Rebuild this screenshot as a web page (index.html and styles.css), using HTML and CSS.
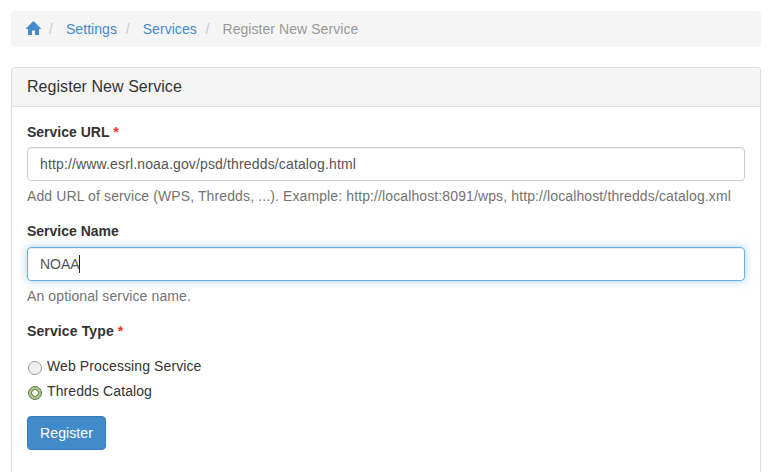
FILE: index.html
```
<!DOCTYPE html>
<html lang="en">
<head>
<meta charset="utf-8">
<title>Register New Service</title>
<link rel="stylesheet" href="styles.css">
</head>
<body>
<ol class="breadcrumb">
  <li><a href="#" aria-label="Home"><svg class="home" viewBox="0 0 15 14" width="15" height="14"><path d="M7.500 0 0 7.500V8h2v6h4V9.500h3V14h4V8h2v-.5z"/></svg></a></li>
  <li><a href="#">Settings</a></li>
  <li><a href="#">Services</a></li>
  <li class="active">Register New Service</li>
</ol>
<section class="panel">
  <h3 class="panel-heading">Register New Service</h3>
  <form class="panel-body">
    <div class="group">
      <label class="title">Service URL <span class="req">*</span></label>
      <div class="control url">http://www.esrl.noaa.gov/psd/thredds/catalog.html</div>
      <p class="help">Add URL of service (WPS, Thredds, ...). Example: http://localhost:8091/wps, http://localhost/thredds/catalog.xml</p>
    </div>
    <div class="group name">
      <label class="title">Service Name</label>
      <div class="control focused">NOAA<span class="caret"></span></div>
      <p class="help">An optional service name.</p>
    </div>
    <div class="group types">
      <label class="title">Service Type <span class="req">*</span></label>
      <div class="option"><span class="radio"></span>Web Processing Service</div>
      <div class="option"><span class="radio checked"></span>Thredds Catalog</div>
    </div>
    <button class="submit" type="button">Register</button>
  </form>
</section>
</body>
</html>
```
FILE: styles.css
```
* { box-sizing: border-box; }
html { overflow: hidden; }
body { display: flex; flex-direction: column; margin: 0; padding: 11px 19px 0 11px; height: 472px; overflow: hidden; background: #fff; color: #333; font: 14px/20px "Liberation Sans", Arial, sans-serif; }
a { color: #428bca; text-decoration: none; }
.breadcrumb { display: flex; flex: none; height: 36px; margin: 0 0 20px; padding: 8px 15px; list-style: none; background: #f5f5f5; border-radius: 4px; letter-spacing: .06px; }
.breadcrumb li + li::before { content: "/"; padding: 0 13px 0 8.700px; color: #ccc; }
.breadcrumb li:nth-child(2)::before { padding-left: 8px; }
.breadcrumb .active { color: #999; }
.home { display: block; margin-top: 2px; fill: #428bca; }
.panel { flex: 1; min-height: 0; border: 1px solid #ddd; border-bottom: 0; border-radius: 4px 4px 0 0; }
.panel-heading { margin: 0; height: 39px; padding: 10px 15px; font-size: 16px; font-weight: 400; line-height: 18px; letter-spacing: .05px; background: #f5f5f5; border-bottom: 1px solid #ddd; border-radius: 3px 3px 0 0; }
.panel-body { padding: 15px 15px 0; }
.group { margin-bottom: 15px; }
.title { display: block; margin-bottom: 5px; font-weight: 700; }
.name .title { margin-bottom: 6px; }
.types .title { margin-bottom: 15px; letter-spacing: .12px; }
.req { color: #f33; }
.control { display: flex; align-items: center; height: 34px; padding: 0 12px; color: #555; border: 1px solid #ccc; border-radius: 4px; box-shadow: inset 0 1px 1px rgba(0,0,0,.075); }
.url { letter-spacing: .145px; }
.focused { border-color: #66afe9; box-shadow: inset 0 1px 1px rgba(0,0,0,.075), 0 0 8px rgba(102,175,233,.6); }
.caret { width: 1px; height: 18px; margin-left: -1px; background: #222; }
.help { margin: 5px 0 10px; color: #737373; white-space: nowrap; letter-spacing: .116px; }
.option { display: flex; align-items: center; height: 20px; margin-top: 5px; letter-spacing: .1px; }
.radio { width: 14px; height: 14px; margin: 3px 5px 0 1px; border: 1px solid #999; border-radius: 50%; background: #f0f0f0; }
.checked { border-color: #65705d; background: radial-gradient(circle, #fff 0 2.500px, #5c6c4e 3.200px, #a5cb7e 4.200px); }
.submit { display: block; width: 79px; height: 34px; padding: 6px 12px; font: inherit; letter-spacing: .1px; color: #fff; background: #428bca; border: 1px solid #357ebd; border-radius: 4px; }
```
